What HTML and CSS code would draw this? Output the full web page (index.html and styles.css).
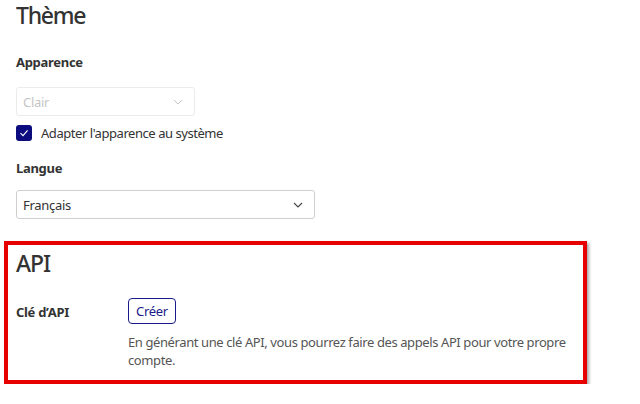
FILE: index.html
```html
<!DOCTYPE html>
<html lang="fr">
<head>
<meta charset="utf-8">
<link rel="stylesheet" href="styles.css">
</head>
<body>
<div class="page">
  <section class="theme">
    <h1 class="title">Thème</h1>
    <div class="label lbl-apparence">Apparence</div>
    <div class="select select-disabled">
      <span>Clair</span>
      <svg class="chev" width="10" height="6" viewBox="0 0 10 6"><path d="M1 1 L5 5 L9 1" fill="none" stroke="#c4c4c4" stroke-width="1"/></svg>
    </div>
    <label class="check-row">
      <span class="checkbox"><svg width="12" height="12" viewBox="0 0 12 12"><path d="M2.5 6.2 L5 8.6 L9.6 3.4" fill="none" stroke="#fff" stroke-width="1.1"/></svg></span>
      <span class="check-label">Adapter l'apparence au système</span>
    </label>
    <div class="label lbl-langue">Langue</div>
    <div class="select select-lang">
      <span>Français</span>
      <svg class="chev" width="10" height="6" viewBox="0 0 10 6"><path d="M1 1 L5 5 L9 1" fill="none" stroke="#444" stroke-width="1.1"/></svg>
    </div>
  </section>
  <section class="api">
    <h2 class="title api-title">API</h2>
    <div class="api-row">
      <div class="label api-label">Clé d’API</div>
      <div class="api-body">
        <button class="btn">Créer</button>
        <p class="desc">En générant une clé API, vous pourrez faire des appels API pour votre propre compte.</p>
      </div>
    </div>
  </section>
</div>
</body>
</html>
```
FILE: styles.css
```css
html, body { margin: 0; padding: 0; background: #fff; }
body { font-family: "Noto Sans", "Open Sans", sans-serif; color: #333; }
.page { width: 640px; padding-top: 1px; }
.theme { padding-left: 16px; }
.title { margin: 0; font-size: 23px; line-height: 29px; font-weight: 500; color: #333; letter-spacing: -1.3px; }
.label { font-size: 13px; line-height: 18px; font-weight: 700; color: #333; letter-spacing: -0.3px; }
.lbl-apparence { margin-top: 23px; }
.select {
  box-sizing: border-box; height: 29px; display: flex; align-items: center;
  justify-content: space-between; padding: 0 11px 0 6px; font-size: 13px;
  border-radius: 3px; background: #fff; letter-spacing: -0.3px;
}
.select-disabled { width: 179px; margin-top: 16px; border: 1px solid #ebebeb; color: #c4c4c4; }
.select-lang { width: 299px; margin-top: 13px; border: 1px solid #cfcfcf; color: #333; }
.chev { display: block; }
.check-row { display: flex; align-items: center; margin-top: 8px; height: 18px; }
.checkbox {
  width: 16px; height: 16px; border-radius: 3px; background: #0c0c7e;
  display: flex; align-items: center; justify-content: center;
}
.checkbox svg { display: block; }
.check-label { margin-left: 9px; font-size: 13px; color: #333; letter-spacing: -0.45px; }
.lbl-langue { margin-top: 17px; }
.api {
  box-sizing: border-box; width: 583px; margin: 22px 0 0 4px;
  border: 4px solid #e60000; padding: 4px 8px 11px 8px;
  box-shadow: 2px 2px 3px rgba(0,0,0,0.35);
}
.api-title { letter-spacing: -1px; }
.api-row { display: flex; margin-top: 20px; }
.api-label { width: 112px; flex: none; padding-top: 5px; }
.api-body { flex: 1; }
.btn {
  display: block; box-sizing: border-box; height: 26px; padding: 0 7px;
  border: 1px solid #1a1a8a; border-radius: 4px; background: #fff;
  color: #1a1a8a; font-family: inherit; font-size: 13px; line-height: 24px; letter-spacing: -0.3px;
}
.desc { margin: 9px 0 0 0; font-size: 13px; line-height: 18px; color: #555; letter-spacing: -0.4px; }
```
